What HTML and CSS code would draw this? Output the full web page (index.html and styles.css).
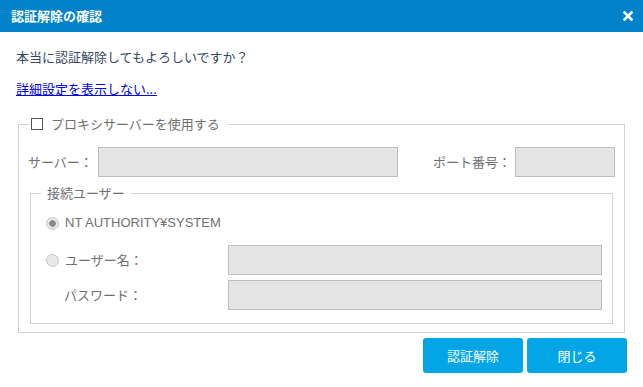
FILE: index.html
```html
<!DOCTYPE html>
<html lang="ja">
<head>
    <meta charset="UTF-8">
    <meta name="viewport" content="width=device-width, initial-scale=1.0">
    <title>認証解除の確認</title>
    <link rel="stylesheet" href="styles.css">
</head>
<body>

    <div class="dialog">
        <div class="dialog-header">
            <span class="dialog-title">認証解除の確認</span>
            <span class="dialog-close">
                <svg width="10" height="10" viewBox="0 0 10 10">
                    <path d="M1.5 1.5 L8.5 8.5 M8.5 1.5 L1.5 8.5" stroke="#fff" stroke-width="2.6" stroke-linecap="square"/>
                </svg>
            </span>
        </div>

        <div class="dialog-body">
            <p class="message">本当に認証解除してもよろしいですか？</p>
            <a href="#" class="detail-link">詳細設定を表示しない...</a>

            <fieldset class="proxy-box">
                <legend class="proxy-legend">
                    <span class="checkbox"></span>
                    <span>プロキシサーバーを使用する</span>
                </legend>

                <div class="server-row">
                    <span class="label server-label">サーバー：</span>
                    <span class="field server-field"></span>
                    <span class="label port-label">ポート番号：</span>
                    <span class="field port-field"></span>
                </div>

                <fieldset class="user-box">
                    <legend class="user-legend">接続ユーザー</legend>

                    <div class="radio-row">
                        <span class="radio checked"></span>
                        <span class="label latin">NT AUTHORITY¥SYSTEM</span>
                    </div>
                    <div class="input-row">
                        <span class="radio"></span>
                        <span class="label user-label">ユーザー名：</span>
                        <span class="field wide-field"></span>
                    </div>
                    <div class="input-row pass-row">
                        <span class="label pass-label">パスワード：</span>
                        <span class="field wide-field"></span>
                    </div>
                </fieldset>
            </fieldset>

            <div class="buttons">
                <button class="btn">認証解除</button>
                <button class="btn">閉じる</button>
            </div>
        </div>
    </div>

</body>
</html>
```

FILE: styles.css
```css
/* ダイアログ全体 */
body {
    margin: 0;
    font-family: "Noto Sans CJK JP", "Noto Sans", sans-serif;
    font-size: 13px;
    background-color: #fff;
    color: #707070;
}
.dialog {
    width: 643px;
    height: 387px;
    background-color: #fff;
}
.dialog-header {
    height: 32px;
    background-color: #0282c8;
    display: flex;
    align-items: center;
    justify-content: space-between;
    padding: 0 10px 0 11px;
}
.dialog-title {
    color: #fff;
    font-weight: bold;
    font-size: 13px;
    line-height: 20px;
}
.dialog-close {
    display: flex;
    width: 10px;
    height: 10px;
}
.dialog-body {
    padding: 15px 16px 0 16px;
}
.message {
    margin: 0;
    line-height: 20px;
    color: #34495e;
}
.detail-link {
    display: inline-block;
    margin-top: 12px;
    line-height: 20px;
    color: #0000ee;
    text-decoration: underline;
}

/* プロキシ設定 */
.proxy-box {
    margin: 15px 0 0 2px;
    width: 607px;
    box-sizing: border-box;
    border: 1px solid #d2d2d2;
    padding: 0 9px 8px 9px;
}
.proxy-legend {
    display: flex;
    align-items: center;
    padding: 0 8px 0 2px;
    margin-left: 1px;
    line-height: 20px;
}
.checkbox {
    width: 10px;
    height: 10px;
    border: 1px solid #555;
    background-color: #fff;
    margin-right: 8px;
}
.server-row {
    display: flex;
    align-items: center;
    margin-top: 13px;
}
.label {
    line-height: 20px;
    white-space: nowrap;
}
.latin {
    font-family: "Liberation Sans", "Noto Sans CJK JP", sans-serif;
}
.server-label {
    width: 70px;
}
.field {
    display: block;
    height: 28px;
    background-color: #e4e4e4;
    border: 1px solid #bcbcbc;
}
.server-field {
    width: 298px;
}
.port-label {
    margin-left: 35px;
    width: 82px;
}
.port-field {
    width: 98px;
}

/* 接続ユーザー */
.user-box {
    margin: 6px 2px 0 2px;
    border: 1px solid #d2d2d2;
    padding: 0 10px 13px 10px;
}
.user-legend {
    padding: 0 6px;
    line-height: 20px;
}
.radio-row {
    display: flex;
    align-items: center;
    margin-top: 10px;
    height: 20px;
    padding-left: 5px;
}
.radio {
    width: 11px;
    height: 11px;
    border: 1px solid #c8c8c8;
    border-radius: 50%;
    background-color: #e8e8e8;
    margin-right: 6px;
    box-sizing: content-box;
    flex-shrink: 0;
}
.radio.checked {
    background: radial-gradient(circle, #8a8a8a 0, #8a8a8a 3px, #e6e6e6 3.6px);
}
.input-row {
    display: flex;
    align-items: center;
    margin-top: 12px;
    padding-left: 5px;
}
.pass-row {
    margin-top: 5px;
    padding-left: 23px;
}
.user-label {
    width: 163px;
}
.pass-label {
    width: 164px;
}
.wide-field {
    width: 372px;
}

/* ボタン */
.buttons {
    display: flex;
    justify-content: flex-end;
    gap: 4px;
    margin: 5px 0 0 0;
}
.btn {
    width: 100px;
    height: 35px;
    background-color: #02a6e6;
    color: #fff;
    border: none;
    border-radius: 3px;
    font-family: "Noto Sans CJK JP", sans-serif;
    font-size: 13px;
    cursor: pointer;
}
.btn:hover {
    background-color: #0295d0;
}
```
